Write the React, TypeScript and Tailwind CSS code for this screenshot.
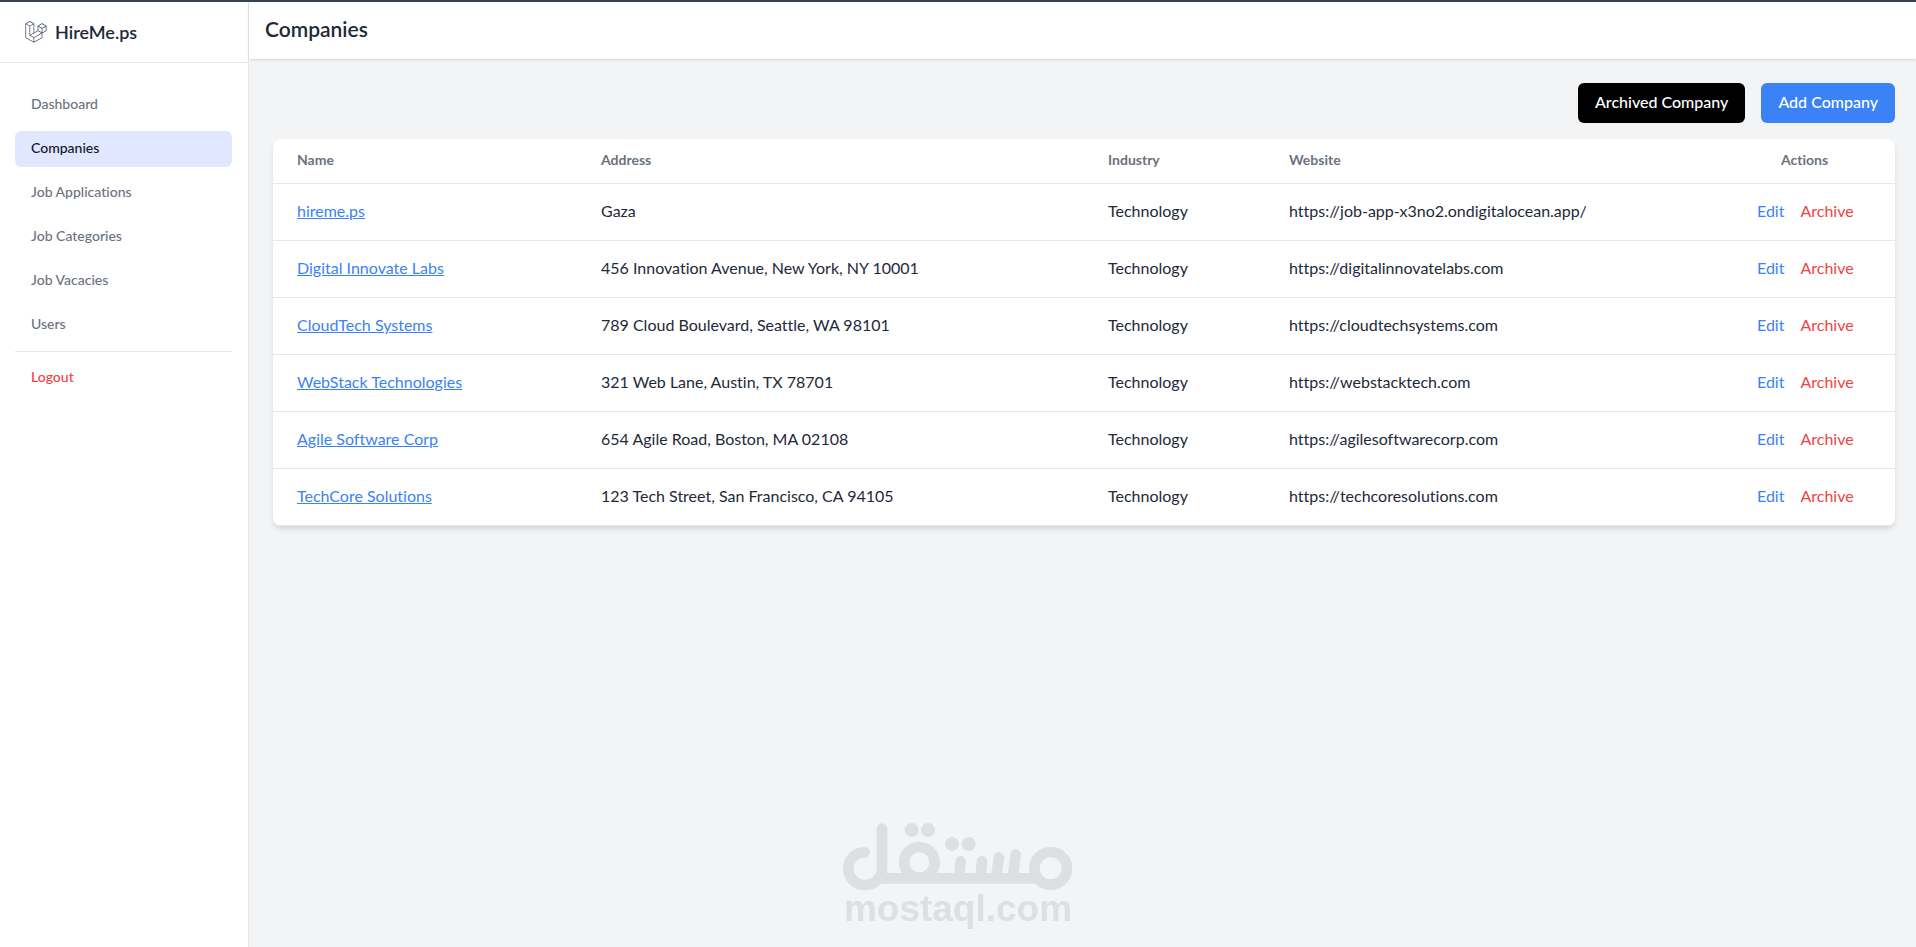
import React from 'react';

interface NavItem {
  label: string;
  active?: boolean;
}

interface Company {
  name: string;
  address: string;
  industry: string;
  website: string;
}

const navItems: NavItem[] = [
  { label: 'Dashboard' },
  { label: 'Companies', active: true },
  { label: 'Job Applications' },
  { label: 'Job Categories' },
  { label: 'Job Vacacies' },
  { label: 'Users' }
];

const companies: Company[] = [
  { name: 'hireme.ps', address: 'Gaza', industry: 'Technology', website: 'https://job-app-x3no2.ondigitalocean.app/' },
  { name: 'Digital Innovate Labs', address: '456 Innovation Avenue, New York, NY 10001', industry: 'Technology', website: 'https://digitalinnovatelabs.com' },
  { name: 'CloudTech Systems', address: '789 Cloud Boulevard, Seattle, WA 98101', industry: 'Technology', website: 'https://cloudtechsystems.com' },
  { name: 'WebStack Technologies', address: '321 Web Lane, Austin, TX 78701', industry: 'Technology', website: 'https://webstacktech.com' },
  { name: 'Agile Software Corp', address: '654 Agile Road, Boston, MA 02108', industry: 'Technology', website: 'https://agilesoftwarecorp.com' },
  { name: 'TechCore Solutions', address: '123 Tech Street, San Francisco, CA 94105', industry: 'Technology', website: 'https://techcoresolutions.com' }
];

const ApplicationLogo: React.FC = () => (
  <svg viewBox="0 0 50 52" className="h-[22px] w-[22px] fill-gray-700" aria-hidden="true">
    <path d="M49.626 11.564a.809.809 0 0 1 .028.209v10.972a.8.8 0 0 1-.402.694l-9.209 5.302V39.25c0 .286-.152.55-.4.694L20.42 51.01c-.044.025-.092.041-.14.058-.018.006-.035.017-.054.022a.805.805 0 0 1-.41 0c-.022-.006-.042-.018-.063-.026-.044-.016-.09-.03-.132-.054L.402 39.944A.801.801 0 0 1 0 39.25V6.334c0-.072.01-.142.028-.21.006-.023.02-.044.028-.067.015-.042.029-.085.051-.124.015-.026.037-.047.055-.071.023-.032.044-.065.071-.093.023-.023.053-.04.079-.06.029-.024.055-.05.088-.069h.001l9.61-5.533a.802.802 0 0 1 .8 0l9.61 5.533h.002c.032.02.059.045.088.068.026.02.055.038.078.06.028.029.048.062.072.094.017.024.04.045.054.071.023.04.036.082.052.124.008.023.022.044.028.068a.809.809 0 0 1 .028.209v20.559l8.008-4.611v-10.51c0-.07.01-.141.028-.208.007-.024.02-.045.028-.068.016-.042.03-.085.052-.124.015-.026.037-.047.054-.071.024-.032.044-.065.072-.093.023-.023.052-.04.078-.06.03-.024.056-.05.088-.069h.001l9.611-5.533a.801.801 0 0 1 .8 0l9.61 5.533c.034.02.06.045.09.068.025.02.054.038.077.06.028.029.048.062.072.094.018.024.04.045.054.071.023.039.036.082.052.124.009.023.022.044.028.068zm-1.574 10.718v-9.124l-3.363 1.936-4.646 2.675v9.124l8.01-4.611zm-9.61 16.505v-9.13l-4.57 2.61-13.05 7.448v9.216l17.62-10.144zM1.602 7.719v31.068L19.22 48.93v-9.214l-9.204-5.209-.003-.002-.004-.002c-.031-.018-.057-.044-.086-.066-.025-.02-.054-.036-.076-.058l-.002-.003c-.026-.025-.044-.056-.066-.084-.02-.027-.044-.05-.06-.078l-.001-.003c-.018-.03-.029-.066-.042-.1-.013-.03-.03-.058-.038-.09v-.001c-.01-.038-.012-.078-.016-.117-.004-.03-.012-.06-.012-.09v-.002-21.481L4.965 9.654 1.602 7.72zm8.81-5.994L2.405 6.334l8.005 4.609 8.006-4.61-8.006-4.608zm4.164 28.764l4.645-2.674V7.719l-3.363 1.936-4.646 2.675v20.096l3.364-1.937zM39.243 7.164l-8.006 4.609 8.006 4.609 8.005-4.61-8.005-4.608zm-.801 10.605l-4.646-2.675-3.363-1.936v9.124l4.645 2.674 3.364 1.937v-9.124zM20.02 38.33l11.743-6.704 5.87-3.35-8-4.606-9.211 5.303-8.395 4.833 7.993 4.524z" />
  </svg>
);

const Watermark: React.FC = () => (
  <div className="pointer-events-none fixed bottom-5 left-1/2 flex -translate-x-1/2 flex-col items-center text-[#dedfe1]">
    <svg viewBox="69 66 690 203" className="w-[230px]" fill="none" stroke="currentColor" strokeWidth="32" strokeLinecap="round" aria-hidden="true">
      <path d="M134 154A49 49 0 0 0 134 252C164 252 186 232 186 202V83" />
      <path d="M172 232H660" strokeLinecap="butt" />
      <circle cx="298" cy="184" r="46" />
      <circle cx="692" cy="202" r="49" />
      <path d="M422 181L418 225M486 181L482 225M537 169L529 225M587 161L579 225" />
      <g fill="currentColor" stroke="none">
        <circle cx="275" cy="87" r="21" />
        <circle cx="324" cy="87" r="21" />
        <circle cx="396" cy="129" r="21" />
        <circle cx="446" cy="129" r="21" />
      </g>
    </svg>
    <span className="font-['Liberation_Sans',sans-serif] text-[37px] leading-9 font-bold">mostaql.com</span>
  </div>
);

const Sidebar: React.FC = () => (
  <nav className="w-[249px] shrink-0 border-r border-gray-200 bg-white">
    <div className="flex h-[61px] items-center border-b border-gray-200 px-[25px]">
      <a href="#" className="flex items-center gap-2">
        <ApplicationLogo />
        <span className="text-lg font-semibold text-gray-800">HireMe.ps</span>
      </a>
    </div>

    <ul className="flex flex-col gap-2 pt-6 pr-4 pl-[15px]">
      {navItems.map((item) => (
        <li key={item.label}>
          <a
            href="#"
            className={`block rounded-md px-4 pt-[7px] pb-[9px] text-sm font-medium ${item.active ? 'bg-[#e0e7ff] text-[#111827]' : 'text-[#6b7280]'}`}
          >
            {item.label}
          </a>
        </li>
      ))}
    </ul>

    <div className="mt-2 mr-4 ml-[15px] border-t border-gray-200 pt-2">
      <button type="button" className="block w-full px-4 pt-[7px] pb-[9px] text-left text-sm font-medium text-[#ef4444]">
        Logout
      </button>
    </div>
  </nav>
);

const CompanyTable: React.FC = () => (
  <table className="mt-4 w-full table-fixed rounded-lg bg-white shadow-md">
    <thead>
      <tr className="border-b border-gray-200 text-left text-sm text-[#6b7280]">
        <th className="w-[304px] px-6 pt-[11px] pb-[13px] font-bold">Name</th>
        <th className="px-6 pt-[11px] pb-[13px] font-bold">Address</th>
        <th className="w-[181px] px-6 pt-[11px] pb-[13px] font-bold">Industry</th>
        <th className="w-[468px] px-6 pt-[11px] pb-[13px] font-bold">Website</th>
        <th className="w-[162px] pt-[11px] pb-[13px] pl-12 font-bold">Actions</th>
      </tr>
    </thead>
    <tbody>
      {companies.map((company) => (
        <tr key={company.name} className="border-b border-gray-200 text-gray-800">
          <td className="px-6 pt-[15px] pb-[17px]">
            <a href="#" className="text-[#3b82f6] underline">{company.name}</a>
          </td>
          <td className="px-6 pt-[15px] pb-[17px]">{company.address}</td>
          <td className="px-6 pt-[15px] pb-[17px]">{company.industry}</td>
          <td className="px-6 pt-[15px] pb-[17px]">{company.website}</td>
          <td className="pt-[15px] pb-[17px] pl-6">
            <div className="flex gap-4">
              <a href="#" className="text-[#3b82f6]">Edit</a>
              <button type="button" className="text-[#ef4444]">Archive</button>
            </div>
          </td>
        </tr>
      ))}
    </tbody>
  </table>
);

const App: React.FC = () => {
  return (
    <div className="flex min-h-screen border-t-2 border-gray-700 bg-gray-100 font-[Lato,sans-serif] text-base [font-variant-ligatures:none]">
      <Sidebar />

      <div className="min-w-0 flex-1">
        <header className="flex h-[57px] items-center bg-white px-4 pb-[3px] shadow">
          <h1 className="text-[21px] leading-7 font-semibold text-gray-800">Companies</h1>
        </header>

        <main className="py-6 pr-[21px] pl-6">
          <div className="flex justify-end gap-4">
            <a href="#" className="rounded-md bg-black px-[17px] pt-[7px] pb-[9px] font-medium text-white">Archived Company</a>
            <a href="#" className="rounded-md bg-[#3b82f6] px-[17px] pt-[7px] pb-[9px] font-medium text-white">Add Company</a>
          </div>
          <CompanyTable />
        </main>
      </div>

      <Watermark />
    </div>
  );
};

export default App;
